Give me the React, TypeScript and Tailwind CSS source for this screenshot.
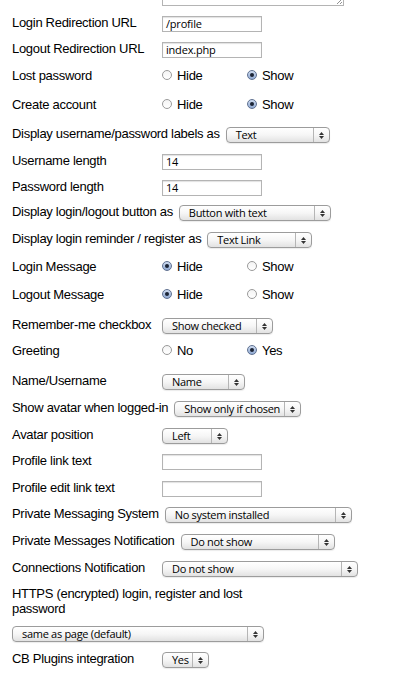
import React from 'react';

type Row =
    | { kind: 'input'; label: string; value: string; mt: string }
    | { kind: 'radio'; label: string; options: [string, string]; checked: number; mt: string }
    | { kind: 'select'; label: string; value: string; width: string; mt: string };

const rows: Row[] = [
    { kind: 'input', label: 'Login Redirection URL', value: '/profile', mt: 'mt-[10px]' },
    { kind: 'input', label: 'Logout Redirection URL', value: 'index.php', mt: 'mt-[10px]' },
    { kind: 'radio', label: 'Lost password', options: ['Hide', 'Show'], checked: 1, mt: 'mt-[9px]' },
    { kind: 'radio', label: 'Create account', options: ['Hide', 'Show'], checked: 1, mt: 'mt-[13px]' },
    { kind: 'select', label: 'Display username/password labels as', value: 'Text', width: 'w-[104px]', mt: 'mt-[15px]' },
    { kind: 'input', label: 'Username length', value: '14', mt: 'mt-[11px]' },
    { kind: 'input', label: 'Password length', value: '14', mt: 'mt-[10px]' },
    { kind: 'select', label: 'Display login/logout button as', value: 'Button with text', width: 'w-[152px]', mt: 'mt-[9px]' },
    { kind: 'select', label: 'Display login reminder / register as', value: 'Text Link', width: 'w-[105px]', mt: 'mt-[11px]' },
    { kind: 'radio', label: 'Login Message', options: ['Hide', 'Show'], checked: 0, mt: 'mt-[10px]' },
    { kind: 'radio', label: 'Logout Message', options: ['Hide', 'Show'], checked: 0, mt: 'mt-[12px]' },
    { kind: 'select', label: 'Remember-me checkbox', value: 'Show checked', width: 'w-[111px]', mt: 'mt-[16px]' },
    { kind: 'radio', label: 'Greeting', options: ['No', 'Yes'], checked: 1, mt: 'mt-[8px]' },
    { kind: 'select', label: 'Name/Username', value: 'Name', width: 'w-[83px]', mt: 'mt-[16px]' },
    { kind: 'select', label: 'Show avatar when logged-in', value: 'Show only if chosen', width: 'w-[127px]', mt: 'mt-[11px]' },
    { kind: 'select', label: 'Avatar position', value: 'Left', width: 'w-[66px]', mt: 'mt-[11px]' },
    { kind: 'input', label: 'Profile link text', value: '', mt: 'mt-[10px]' },
    { kind: 'input', label: 'Profile edit link text', value: '', mt: 'mt-[11px]' },
    { kind: 'select', label: 'Private Messaging System', value: 'No system installed', width: 'w-[187px]', mt: 'mt-[10px]' },
    { kind: 'select', label: 'Private Messages Notification', value: 'Do not show', width: 'w-[154px]', mt: 'mt-[11px]' },
    { kind: 'select', label: 'Connections Notification', value: 'Do not show', width: 'w-[196px]', mt: 'mt-[11px]' },
];

const controlFont = { fontFamily: '"Open Sans", "DejaVu Sans", sans-serif' };

function Select({ value, width }: { value: string; width: string }) {
    return (
        <div
            className={`${width} h-[16px] flex items-stretch rounded-[4px] border border-[#9c9c9c] bg-gradient-to-b from-white via-[#f6f6f6] to-[#e2e2e2] shadow-[0_1px_1px_rgba(0,0,0,0.08)] shrink-0`}
        >
            <span className="flex-1 pl-[9px] text-[11px] tracking-[-0.3px] leading-[14px] text-black whitespace-nowrap overflow-hidden" style={controlFont}>
                {value}
            </span>
            <span className="w-[16px] border-l border-[#b5b5b5] flex flex-col items-center justify-center gap-[1px]">
                <svg width="5" height="3" viewBox="0 0 5 3"><path d="M2.5 0L5 3H0z" fill="#333" /></svg>
                <svg width="5" height="3" viewBox="0 0 5 3"><path d="M0 0h5L2.5 3z" fill="#333" /></svg>
            </span>
        </div>
    );
}

function TextInput({ value }: { value: string }) {
    return (
        <div className="w-[100px] h-[16px] border border-[#b4b4b4] shadow-[inset_0_1px_1px_rgba(0,0,0,0.12)] bg-white pl-[3px] text-[11px] tracking-[-0.2px] leading-[14px] text-black shrink-0" style={controlFont}>
            {value}
        </div>
    );
}

function Radio({ checked }: { checked: boolean }) {
    return checked ? (
        <span className="w-[10px] h-[10px] rounded-full border border-[#5f7191] bg-gradient-to-b from-[#cfdcf0] to-[#90a9d2] flex items-center justify-center shrink-0">
            <span className="w-[4px] h-[4px] rounded-full bg-[#1b2435]" />
        </span>
    ) : (
        <span className="w-[10px] h-[10px] rounded-full border border-[#9a9a9a] bg-gradient-to-b from-[#f4f4f4] to-white shrink-0" />
    );
}

function Label({ text, raise }: { text: string; raise?: boolean }) {
    return (
        <span className={`min-w-[150px] pr-[6px] shrink-0 whitespace-nowrap leading-[15px] ${raise ? 'mb-[3px]' : ''}`}>
            {text}
        </span>
    );
}

export default function App() {
    return (
        <div className="w-[417px] h-[679px] overflow-hidden bg-white text-[13px] tracking-[-0.3px] text-black pl-[12px]" style={{ fontFamily: '"Liberation Sans", Arial, sans-serif' }}>
            {/* tail of the textarea above */}
            <div className="h-[6px] overflow-hidden flex items-end pl-[150px]">
                <div className="relative w-[182px] h-[40px] border border-[#b4b4b4] bg-white shrink-0">
                    <svg className="absolute right-[1px] bottom-[1px]" width="7" height="5" viewBox="0 0 7 5">
                        <path d="M2 5L7 0M5 5L7 3" stroke="#777" strokeWidth="0.8" />
                    </svg>
                </div>
            </div>

            {rows.map((row) => (
                <div key={row.label + row.mt} className={`flex items-center h-[16px] ${row.mt}`}>
                    <Label text={row.label} raise={row.kind !== 'radio'} />
                    {row.kind === 'input' && <TextInput value={row.value} />}
                    {row.kind === 'select' && <Select value={row.value} width={row.width} />}
                    {row.kind === 'radio' &&
                        row.options.map((opt, i) => (
                            <span key={opt} className="w-[85px] flex items-center gap-[5px] shrink-0">
                                <Radio checked={row.checked === i} />
                                <span className="leading-[15px]">{opt}</span>
                            </span>
                        ))}
                </div>
            ))}

            <div className="mt-[9px] w-[250px] leading-[15px]">HTTPS (encrypted) login, register and lost password</div>
            <div className="mt-[10px]">
                <Select value="same as page (default)" width="w-[252px]" />
            </div>
            <div className="flex items-center h-[16px] mt-[10px]">
                <Label text="CB Plugins integration" raise />
                <Select value="Yes" width="w-[47px]" />
            </div>
        </div>
    );
}
